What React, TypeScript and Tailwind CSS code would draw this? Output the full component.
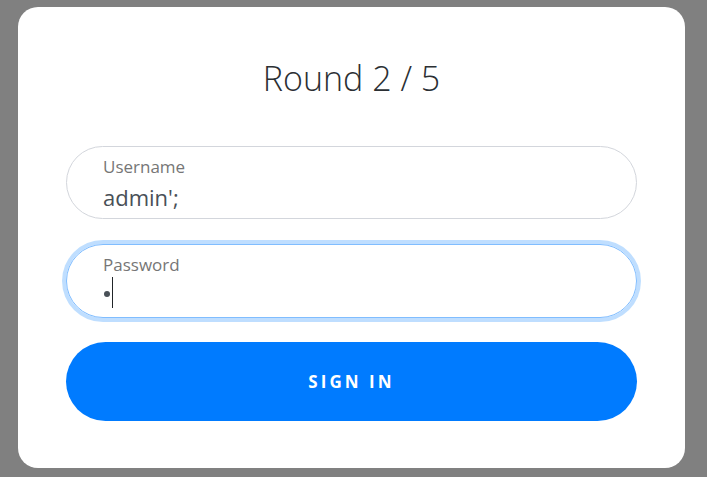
export default function App() {
  return (
    <div className="min-h-[477px] bg-[#808080] pl-[18px] pt-[7px]" style={{ fontFamily: '"Open Sans", "Noto Sans", sans-serif' }}>
      <div className="w-[667px] h-[461px] rounded-[20px] bg-white px-12 pt-[51px]">
        <h1 className="text-center text-[34px] leading-[40px] font-light text-[#2b2f33]">Round 2 / 5</h1>

        <div className="mt-[48px] flex flex-col gap-[25px]">
          {/* Username */}
          <div className="h-[73px] rounded-full border border-[#d3d6dc] pl-[36px] pt-[10px]">
            <div className="text-[17px] leading-[20px] text-[#767676]">Username</div>
            <div className="mt-[7px] text-[22px] leading-[26px] text-[#495057]">admin';</div>
          </div>

          {/* Password (focused) */}
          <div className="h-[74px] rounded-full border border-[#80bdff] ring-4 ring-[#007bff]/25 pl-[36px] pt-[10px]">
            <div className="text-[17px] leading-[20px] text-[#767676]">Password</div>
            <div className="mt-[2px] flex h-[31px] items-center">
              <span className="ml-[1px] mt-[3px] h-[6px] w-[6px] rounded-full bg-[#495057]" />
              <span className="ml-[2px] h-[31px] w-px bg-[#212529]" />
            </div>
          </div>
        </div>

        <button className="mt-[24px] h-[79px] w-full rounded-full bg-[#007bff] text-[17px] font-bold tracking-[0.18em] text-white">
          SIGN IN
        </button>
      </div>
    </div>
  );
}
